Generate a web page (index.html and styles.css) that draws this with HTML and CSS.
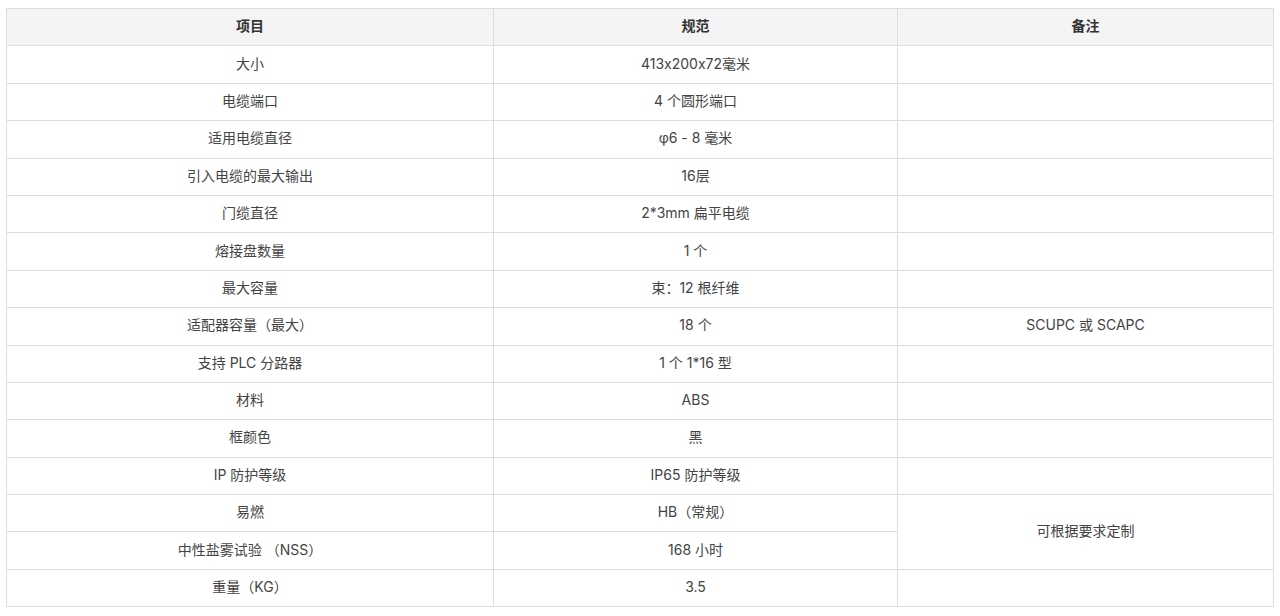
FILE: index.html
```html
<!DOCTYPE html>
<html lang="zh">
<head>
<meta charset="utf-8">
<title>规格</title>
<link rel="stylesheet" href="styles.css">
</head>
<body>
<div class="wrap">
<table class="spec">
  <colgroup>
    <col class="c1"><col class="c2"><col class="c3">
  </colgroup>
  <thead>
    <tr><th>项目</th><th>规范</th><th>备注</th></tr>
  </thead>
  <tbody>
    <tr><td>大小</td><td>413x200x72毫米</td><td></td></tr>
    <tr><td>电缆端口</td><td>4 个圆形端口</td><td></td></tr>
    <tr><td>适用电缆直径</td><td>φ6 - 8 毫米</td><td></td></tr>
    <tr><td>引入电缆的最大输出</td><td>16层</td><td></td></tr>
    <tr><td>门缆直径</td><td>2*3mm 扁平电缆</td><td></td></tr>
    <tr><td>熔接盘数量</td><td>1 个</td><td></td></tr>
    <tr><td>最大容量</td><td>束：12 根纤维</td><td></td></tr>
    <tr><td>适配器容量（最大）</td><td>18 个</td><td>SCUPC 或 SCAPC</td></tr>
    <tr><td>支持 PLC 分路器</td><td>1 个 1*16 型</td><td></td></tr>
    <tr><td>材料</td><td>ABS</td><td></td></tr>
    <tr><td>框颜色</td><td>黑</td><td></td></tr>
    <tr><td>IP 防护等级</td><td>IP65 防护等级</td><td></td></tr>
    <tr><td>易燃</td><td>HB（常规）</td><td rowspan="2">可根据要求定制</td></tr>
    <tr><td>中性盐雾试验 （NSS）</td><td>168 小时</td></tr>
    <tr><td>重量（KG）</td><td>3.5</td><td></td></tr>
  </tbody>
</table>
</div>
</body>
</html>
```
FILE: styles.css
```css
html, body {
  margin: 0;
  padding: 0;
  background: #fff;
}
.wrap {
  padding: 8px 6px 0 6px;
}
.spec {
  width: 1267px;
  border-collapse: collapse;
  table-layout: fixed;
  font-family: "Inter", "Noto Sans CJK SC", sans-serif;
  font-feature-settings: "calt" 0;
  font-size: 14px;
  color: #444;
}
.c1 { width: 487px; }
.c2 { width: 404px; }
.c3 { width: 376px; }
.spec th, .spec td {
  border: 1px solid #dddddd;
  text-align: center;
  vertical-align: middle;
  padding: 0 8px 2px 8px;
  height: 34.4px;
  line-height: 20px;
}
.spec th {
  background: #f4f4f4;
  font-weight: 700;
  color: #333;
}
```
